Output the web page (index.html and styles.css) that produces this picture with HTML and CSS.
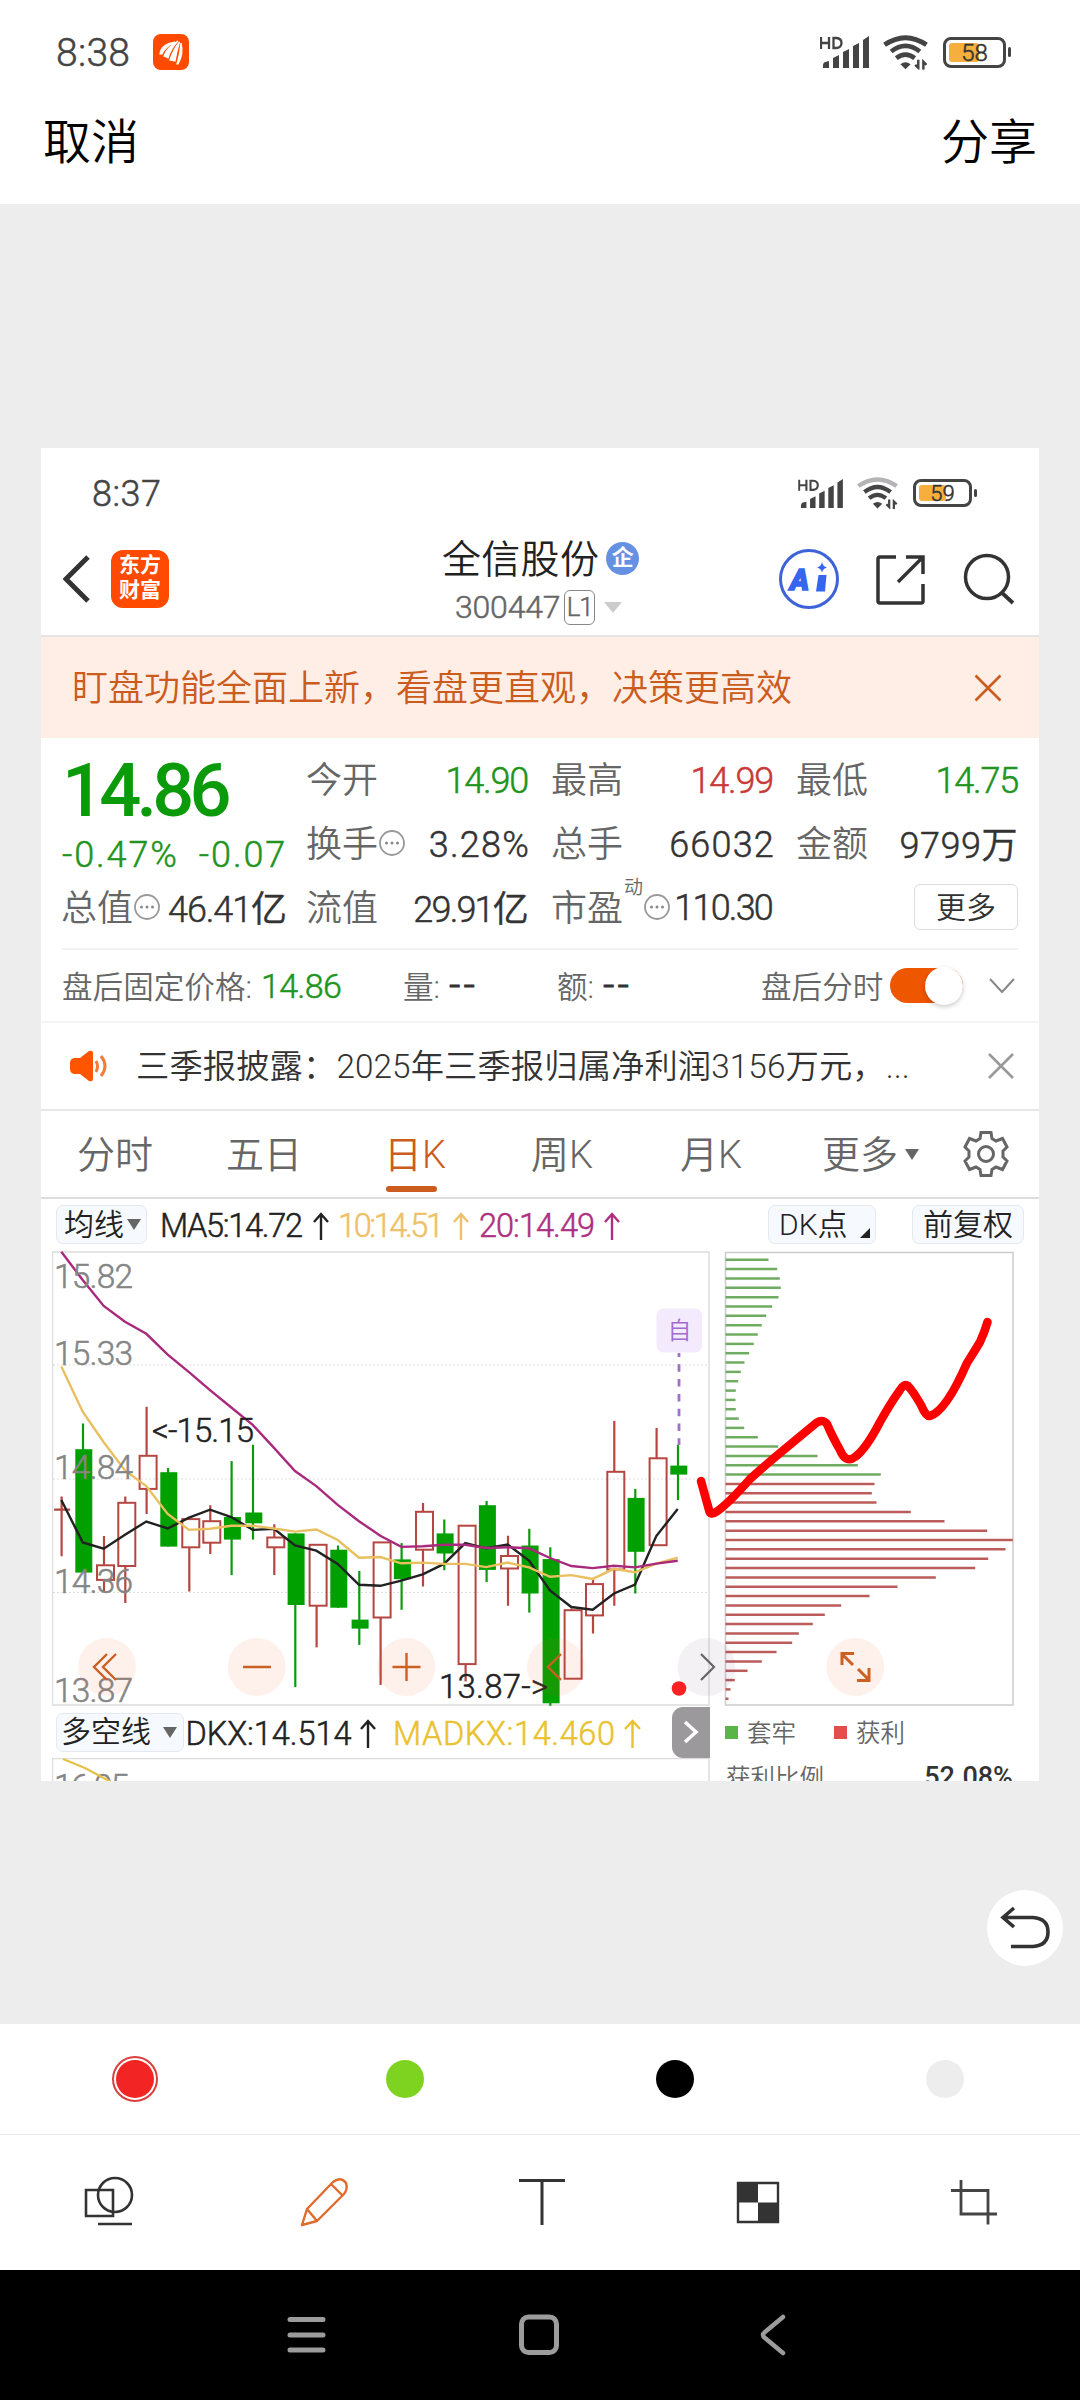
FILE: index.html
```html
<!DOCTYPE html>
<html lang="zh-CN">
<head>
<meta charset="utf-8">
<title>编辑图片</title>
<link rel="stylesheet" href="styles.css">
</head>
<body>
<svg width="0" height="0" class="defs">
  <symbol id="signal" viewBox="0 0 50 34">
    <path d="M1 2v12M1 8h8M9 2v12M13.500 3v10h3q5-.5 5-5t-5-5z" fill="none" stroke="#444" stroke-width="2.300"/>
    <g fill="#444"><path d="M3 33v-3q0-2 2-3l4-1v7zM13 33V23l6-3v13zM23 33V17l6-3v19zM33 33V11l6-3v25zM43 33V5l6-4v32z"/></g>
  </symbol>
  <symbol id="wifi" viewBox="0 0 46 34">
    <path d="M9 16q14-11 28 0M14 22.500q9-7 18 0" fill="none" stroke="#444" stroke-width="4.600"/>
    <path d="M23 33.500l-5-5q5-4 10 0z" fill="#444"/>
    <path d="M35.500 24v8l-3-3M40.500 34v-8l3 3" fill="none" stroke="#444" stroke-width="2.400"/>
  </symbol>
  <symbol id="dots" viewBox="0 0 28 28">
    <circle cx="14" cy="14" r="12" fill="none" stroke="#999" stroke-width="1.800"/>
    <g fill="#888"><circle cx="8.500" cy="14" r="1.500"/><circle cx="14" cy="14" r="1.500"/><circle cx="19.500" cy="14" r="1.500"/></g>
  </symbol>
</svg>

<header class="top">
  <div class="status">
    <span class="clock">8:38</span>
    <svg class="app" viewBox="0 0 36 36"><rect width="36" height="36" rx="8" fill="#ff4a00"/><path d="M7 20Q8 10 22 8Q13 12 9 20zM11 22Q14 13 25 7Q18 14 15 24zM17 26Q20 16 26.500 8Q24 16 22 27zM24 30Q27 20 28 9Q31 20 25 30z" fill="#fff" stroke="#fff" stroke-width="1.200"/></svg>
    <svg class="sig" viewBox="0 0 50 34"><use href="#signal"/></svg>
    <svg class="wif" viewBox="0 0 46 34"><path d="M2.500 9.500q20.500-14 41 0" fill="none" stroke="#444" stroke-width="4.800"/><use href="#wifi"/></svg>
    <span class="batt"><i></i><b>58</b></span>
  </div>
  <div class="actions"><span>取消</span><span>分享</span></div>
</header>

<main class="stage">
  <section class="card">
    <div class="istatus">
      <span class="clock">8:37</span>
      <svg class="sig" viewBox="0 0 50 34"><use href="#signal"/></svg>
      <svg class="wif" viewBox="0 0 46 34"><path d="M2.500 9.500q20.500-14 41 0" fill="none" stroke="#b5b3b5" stroke-width="4.800"/><use href="#wifi"/></svg>
      <span class="batt"><i></i><b>59</b></span>
    </div>
    <div class="inav">
      <svg class="back" viewBox="0 0 28 48"><path d="M25 2L3 24l22 22" fill="none" stroke="#333" stroke-width="5"/></svg>
      <div class="brand">东方<br>财富</div>
      <div class="title">
        <div class="name"><span>全信股份</span><em>企</em></div>
        <div class="code"><span>300447</span><u>L1</u><i class="tri"></i></div>
      </div>
      <svg class="navicons" viewBox="0 0 160 70">
        <circle cx="34" cy="35" r="28.500" fill="none" stroke="#3e63d8" stroke-width="3"/>
        <text x="15" y="46" class="ai" textLength="23">A</text>
        <path d="M43.500 31h8l-1.500 16.500h-9z" fill="#3566f0"/>
        <path d="M47 18q1 4.500 5 5.500q-4 1-5 5q-1-4-5-5q4-1 5-5.500z" fill="#3566f0"/>
        <path d="M121 13h-16q-2 0-2 2v42q0 2 2 2h41q2 0 2-2V40M131 13h17v17M148 13L123 38" fill="none" stroke="#333" stroke-width="3.500"/>
      </svg>
      <svg class="search" viewBox="0 0 52 52"><circle cx="24" cy="24" r="21.500" fill="none" stroke="#333" stroke-width="3.500"/><path d="M38 39l12 11" stroke="#333" stroke-width="3.800"/></svg>
    </div>
    <div class="banner"><span>盯盘功能全面上新，看盘更直观，决策更高效</span><svg width="28" height="28" viewBox="0 0 28 28"><path d="M1.500 1.500l25 25M26.500 1.500l-25 25" stroke="#cc5c1d" stroke-width="2.600"/></svg></div>

    <div class="quote">
      <div class="price">
        <strong>14.86</strong>
        <div class="chg"><span>-0.47%</span><span>-0.07</span></div>
        <div class="cell"><span>总值</span><svg class="dot"><use href="#dots"/></svg><b class="n2">46.41亿</b></div>
      </div>
      <div class="grid">
        <div class="cell"><span>今开</span><b class="g n1">14.90</b></div>
        <div class="cell"><span>最高</span><b class="r n1">14.99</b></div>
        <div class="cell"><span>最低</span><b class="g n1 last">14.75</b></div>
        <div class="cell"><span>换手</span><svg class="dot"><use href="#dots"/></svg><b class="n3">3.28%</b></div>
        <div class="cell"><span>总手</span><b class="n3">66032</b></div>
        <div class="cell"><span>金额</span><b class="n5">9799万</b></div>
        <div class="cell"><span>流值</span><b class="n4">29.91亿</b></div>
        <div class="cell"><span>市盈</span><sup>动</sup><svg class="dot"><use href="#dots"/></svg><b class="n4 pe">110.30</b></div>
        <div class="cell"><button class="more">更多</button></div>
      </div>
    </div>

    <div class="after">
      <span class="a1">盘后固定价格:</span><b class="g a2">14.86</b>
      <span class="a3">量:</span><b class="a4">--</b>
      <span class="a3b">额:</span><b class="a4b">--</b>
      <span class="a5">盘后分时</span><div class="toggle"><i></i></div>
      <svg width="26" height="16" viewBox="0 0 26 16"><path d="M1 1l12 13L25 1" fill="none" stroke="#888" stroke-width="2"/></svg>
    </div>
    <div class="news">
      <svg class="horn" viewBox="0 0 38 32"><path d="M4 8h6l9-7q4-1 4 2v26q0 3-4 2l-9-7H4q-4-1-4-5v-6q0-4 4-5z" fill="#ff5500"/><path d="M26 11q3 5 0 11M31 6q8 10 0 20" fill="none" stroke="#f47a3a" stroke-width="3"/></svg>
      <p>三季报披露：2025年三季报归属净利润3156万元，...</p>
      <svg width="26" height="26" viewBox="0 0 26 26"><path d="M1 1l24 24M25 1L1 25" stroke="#999" stroke-width="2.600"/></svg>
    </div>
    <nav class="tabs">
      <span class="t1">分时</span><span class="t2">五日</span><span class="t3 on">日K</span><span class="t4">周K</span><span class="t5">月K</span><span class="t6">更多</span><i class="tri"></i>
      <svg class="gear" viewBox="-23 -23 46 46"><path d="M-5-21.500H5L6-15.500L10-13L16.500-15.500L21-7L17-3V3L21 7L16.500 15.500L10 13L6 15.500L5 21.500H-5L-6 15.500L-10 13L-16.500 15.500L-21 7L-17 3V-3L-21-7L-16.500-15.500L-10-13L-6-15.500z" fill="none" stroke="#666" stroke-width="3"/><circle r="7.500" fill="none" stroke="#666" stroke-width="3"/></svg>
    </nav>
    <div class="ma">
      <span class="pill p1">均线<i class="tri"></i></span>
      <svg class="malegend" viewBox="0 0 480 40">
        <text x="1" y="32" textLength="143" fill="#222" stroke="#222">MA5:14.72</text>
        <text x="179" y="32" textLength="106" fill="#eec067" stroke="#eec067">10:14.51</text>
        <text x="320" y="32" textLength="116" fill="#ae2f80" stroke="#ae2f80">20:14.49</text>
        <g fill="none" stroke-width="2.400"><path d="M162 35V9M155 17l7-8 7 8" stroke="#222"/><path d="M302 35V9M295 17l7-8 7 8" stroke="#eec067"/><path d="M453 35V9M446 17l7-8 7 8" stroke="#ae2f80"/></g>
      </svg>
      <span class="pill p2">DK点<i class="corner"></i></span>
      <span class="pill p3">前复权</span>
    </div>

    <div class="charts">
      <div class="left">
        <svg id="kline" width="658" height="456" viewBox="52 1250 658 456"></svg>
        <div class="dkx">
          <span class="pill p4">多空线<i class="tri"></i></span>
          <svg class="dkxlegend" viewBox="187 1707 485 50">
            <text x="185.500" y="1744.500" textLength="166" fill="#222" stroke="#222">DKX:14.514</text>
            <text x="393" y="1744.500" textLength="222" fill="#e9c22f" stroke="#e9c22f">MADKX:14.460</text>
            <g fill="none" stroke-width="2.400"><path d="M368 1748v-27M361 1729l7-8 7 8" stroke="#222"/><path d="M632.500 1748v-27M625 1729l7.500-8 7.500 8" stroke="#e9c22f"/></g>
          </svg>
          <span class="next"><svg width="16" height="24" viewBox="0 0 16 24"><path d="M2 2l11 10L2 22" fill="none" stroke="#fff" stroke-width="3.500"/></svg></span>
        </div>
        <svg width="658" height="23" viewBox="52 1758 658 23">
          <path d="M52.500 1781v-22.500H709V1781" fill="none" stroke="#ddd" stroke-width="1.500"/>
          <text x="54" y="1797.500" textLength="75" class="axis">16.05</text>
          <path d="M63 1759l22 9 26 14" fill="none" stroke="#e6c14a" stroke-width="2.200"/>
        </svg>
      </div>
      <div class="right">
        <svg id="chips" width="292" height="456" viewBox="723 1250 292 456"></svg>
        <div class="legend"><i class="lg"></i><span>套牢</span><i class="lr"></i><span>获利</span></div>
        <div class="ratio"><span>获利比例</span><b>52.08%</b></div>
      </div>
    </div>
    <svg class="overlay" viewBox="41 1250 998 456">
      <g fill="#f4622d" fill-opacity=".09"><circle cx="107" cy="1667" r="29"/><circle cx="256.700" cy="1667" r="29"/><circle cx="406.300" cy="1667" r="29"/><circle cx="556" cy="1667" r="29"/><circle cx="855.300" cy="1667" r="29"/></g>
      <circle cx="706.500" cy="1667" r="29" fill="#705080" fill-opacity=".08"/>
      <g fill="none" stroke="#cc5f22" stroke-width="2.400"><path d="M107 1654l-13 13 13 13M116 1654l-13 13 13 13M243 1667h28M392.500 1667h28M406.500 1653v28M561 1654l-13 13 13 13"/><path d="M853 1665l-11-11M842 1665v-11.500h12M858 1669l11 11M869 1668v12.500h-12" stroke-width="3"/></g>
      <path d="M701 1654l13 13-13 13" fill="none" stroke="#666" stroke-width="2.200"/>
      <path d="M701 1481L709 1510Q710 1516 716 1512Q727 1505 750 1479Q762 1468 780 1453L815 1424Q822 1418 827 1424Q832 1436 840 1450Q846 1464 855 1457Q866 1449 880 1422Q890 1404 900 1390Q904 1383 908 1386Q913 1391 921 1405Q926 1417 930 1416Q946 1411 967 1363Q974 1352 980 1342Q985 1331 987.500 1322" fill="none" stroke="#f00" stroke-width="8.500" stroke-linecap="round" stroke-linejoin="round"/>
    </svg>
  </section>
  <svg class="undo" viewBox="987 1890 76 76"><circle cx="1025" cy="1928" r="38" fill="#fff"/><path d="M1014 1908l-11 9.500 11 9.500M1004 1917.500h29q15 1 15 14.500t-15 14.500h-22" fill="none" stroke="#333" stroke-width="3.600"/></svg>
</main>

<div class="colors"><i class="c1"></i><i class="c2"></i><i class="c3"></i><i class="c4"></i></div>
<div class="tools">
  <svg viewBox="78 2170 60 60"><g fill="none" stroke="#333" stroke-width="2.600"><path d="M86 2189h27v26H86zM98 2223h34"/><circle cx="115" cy="2194" r="17"/></g></svg>
  <svg viewBox="295 2171 60 60"><g fill="none" stroke="#df6b2c" stroke-width="2.400" stroke-linejoin="round"><path d="M302 2225l5-16 26-27q8-6 13 1 2 6-2 11l-27 27zM307 2209l10 12M331 2184l11 11"/></g></svg>
  <svg viewBox="512 2171 60 60"><path d="M519 2180.500h46M542 2180v45" stroke="#333" stroke-width="3" fill="none"/></svg>
  <svg viewBox="728 2171 60 60"><path d="M738 2183h40v39h-40z" fill="#fff" stroke="#333" stroke-width="2.400"/><path d="M738 2183h20v19.500h-20zM758 2202.500h20v20h-20z" fill="#333"/></svg>
  <svg viewBox="945 2171 60 60"><path d="M951 2190.500h37v34M961 2180v34h36" fill="none" stroke="#444" stroke-width="2.800"/></svg>
</div>
<footer class="sys">
  <svg viewBox="0 2270 1080 130"><g fill="none" stroke="#9c9c9c" stroke-width="5" stroke-linecap="round"><path d="M290 2319.500h33M290 2335h33M290 2350h33"/><rect x="521.500" y="2317" width="35" height="35.500" rx="7" /><path d="M783 2317l-18 15q-4 3 0 6l18 15" stroke-width="4.500"/></g></svg>
</footer>
<script src="script.js"></script>
</body>
</html>
```
FILE: styles.css
```css
* { box-sizing: border-box; margin: 0; padding: 0; }
body { width: 1080px; height: 2400px; background: #fff; font-family: Roboto, "Noto Sans CJK SC", sans-serif; font-weight: 350; color: #333; overflow: hidden; display: flex; flex-direction: column; }
svg { display: block; flex: none; }
.defs { position: absolute; }
b, strong, em, u { font-weight: 350; font-style: normal; text-decoration: none; }
span, b { white-space: nowrap; }
b, u, .clock, .chg span, .code span { -webkit-text-stroke: .5px; }
.g { color: #1f9420 !important; }
.r { color: #c83a38 !important; }
.tri { border: 7px solid transparent; border-top: 11px solid #666; border-bottom: 0; }

.top { height: 204px; flex: none; }
.status { height: 104px; display: flex; align-items: center; padding-left: 56px; }
.clock { color: #444; }
.status .clock { width: 97px; font-size: 39px; padding-top: 2px; letter-spacing: .3px; }
.app { width: 36px; height: 36px; }
.status .sig { width: 50px; height: 34px; margin-left: 631px; }
.status .wif { width: 47px; height: 35px; margin-left: 12px; }
.batt { position: relative; border: 3px solid #444; border-radius: 8px; display: flex; align-items: center; justify-content: center; }
.batt::after { content: ""; position: absolute; right: -8px; top: 30%; height: 40%; width: 3px; border-radius: 2px; background: #444; }
.batt i { position: absolute; left: 3px; top: 3px; bottom: 3px; width: 30px; background: #f6ae3c; border-radius: 3px; }
.batt b { position: relative; font-size: 24px; line-height: 20px; color: #333; padding-top: 1px; }
.status .batt { width: 63px; height: 31px; margin-left: 14px; }
.actions { height: 76px; display: flex; justify-content: space-between; align-items: center; padding: 1px 43px 0; font-size: 48px; line-height: 68px; color: #000; }

.stage { height: 1820px; flex: none; background: #ededed; padding: 244px 41px 0; position: relative; }
.card { position: relative; width: 998px; height: 1333px; background: #fff; overflow: hidden; }
.undo { position: absolute; left: 987px; top: 1686px; width: 76px; height: 76px; }

.istatus { height: 90px; display: flex; align-items: center; padding-left: 51px; }
.istatus .clock { width: 706px; font-size: 36px; padding-top: 2px; letter-spacing: .5px; }
.istatus .sig { width: 46px; height: 31px; }
.istatus .wif { width: 43px; height: 32px; margin-left: 12px; }
.istatus .batt { width: 59px; height: 28px; margin-left: 14px; }
.istatus .batt b { font-size: 22px; }
.istatus .batt i { width: 27px; }

.inav { height: 99px; display: flex; padding-left: 22px; border-bottom: 2px solid #e6e3e4; }
.back { width: 28px; height: 48px; margin-top: 17px; }
.brand { width: 58px; height: 58px; margin: 12px 0 0 20px; border-radius: 12px; background: #ff4a00; color: #fff; font-weight: 700; font-size: 21px; line-height: 25px; text-align: center; padding-top: 3px; }
.title { width: 180px; margin-left: 273px; }
.name { height: 44px; display: flex; align-items: center; font-size: 39px; color: #222; }
.name span { padding-bottom: 8px; letter-spacing: .3px; }
.name em { width: 33px; height: 33px; flex: none; margin-left: 7px; margin-bottom: 4px; border-radius: 50%; background: #6690e2; color: #fff; font-size: 22px; font-weight: 700; line-height: 32px; text-align: center; }
.code { display: flex; align-items: center; margin: 7px 0 0 13px; height: 36px; color: #666; font-size: 32px; }
.code span { width: 111px; letter-spacing: -.2px; }
.code u { width: 31px; height: 35px; border: 1.500px solid #888; border-radius: 6px; font-size: 26px; line-height: 33px; text-align: center; letter-spacing: -1px; }
.code .tri { margin-left: 9px; border-width: 11px 9px 0; border-top-color: #ccc; }
.navicons { width: 160px; height: 70px; margin: 6px 0 0 153px; }
.ai { font: italic 900 29px Roboto, sans-serif; fill: #3566f0; stroke: #3566f0; stroke-width: 1.500px; }
.search { width: 52px; height: 52px; margin: 15px 0 0 28px; }
.banner { height: 101px; background: #feeee6; display: flex; align-items: center; justify-content: space-between; padding: 0 37px 0 31px; font-size: 36px; color: #cc5c1d; }
.banner span { padding-bottom: 6px; }

.quote { height: 212px; margin: 0 21px; border-bottom: 2px solid #f2f2f2; display: flex; }
.price { width: 245px; }
.price strong { display: block; height: 86px; padding-top: 14px; line-height: 78px; font-size: 74px; font-weight: 500; letter-spacing: -4.800px; color: #0a9a0a; }
.chg { height: 51px; display: flex; gap: 20px; font-size: 36px; line-height: 63px; color: #1f9420; letter-spacing: 1.900px; }
.price .cell { height: 64px; width: 224px; }
.grid { display: grid; grid-template-columns: 223px 223px 221px; column-gap: 22px; grid-template-rows: 64px 64px 63px; padding-top: 9px; }
.cell { display: flex; align-items: center; font-size: 36px; color: #666; }
.cell > span { padding-bottom: 4px; margin-left: -1px; }
.cell b { margin-left: auto; color: #333; padding-top: 3px; }
.cell .n1 { letter-spacing: -1.200px; margin-right: 2px; }
.cell .last { margin-right: 0; }
.cell .n2 { letter-spacing: -1.100px; padding: 0 0 2px; }
.cell .n3 { letter-spacing: 1.200px; }
.cell .n4 { letter-spacing: -1.800px; padding: 0 0 2px; margin-right: 3px; }
.cell .n5 { letter-spacing: .5px; padding: 0 0 2px; }
.cell .pe { padding: 2px 0 0; }
.dot { width: 28px; height: 28px; }
.cell sup { font-size: 19px; line-height: 28px; align-self: flex-start; margin: -1px 0 0 1px; }
.more { width: 104px; height: 46px; margin-left: auto; border: 1.500px solid #ddd; border-radius: 6px; background: #fff; font: 350 30px "Noto Sans CJK SC", sans-serif; line-height: 38px; padding-bottom: 3px; color: #333; }

.after { height: 73px; display: flex; align-items: center; padding-left: 21px; border-bottom: 2px solid #f4f4f4; font-size: 30.600px; color: #666; }
.after b { color: #333; font-size: 34px; }
.after span { padding-bottom: 2px; }
.a1 { width: 199px; } .a2 { width: 142px; letter-spacing: -.7px; } .a3 { width: 46px; } .a4 { width: 108px; } .a3b { width: 46px; } .a4b { width: 158px; } .a5 { width: 129px; }
.after .a4, .after .a4b { letter-spacing: 3px; font-size: 40px; -webkit-text-stroke: .8px; }
.toggle { width: 73px; height: 35px; border-radius: 18px; background: #ee5600; position: relative; margin-right: 26px; }
.toggle i { position: absolute; right: 0; top: -1px; width: 38px; height: 38px; border-radius: 50%; background: #fff; box-shadow: 0 2px 5px #0003; }
.news { height: 88px; display: flex; align-items: center; padding-left: 29px; border-bottom: 2px solid #e6e6e6; font-size: 33.300px; }
.horn { width: 38px; height: 32px; }
.news p { width: 851px; margin-left: 28px; margin-right: 1px; padding-bottom: 6px; white-space: nowrap; letter-spacing: .1px; }
.tabs { height: 88px; display: flex; align-items: center; font-size: 38px; color: #666; padding-left: 36px; border-bottom: 2px solid #ddd; }
.tabs span { width: 149px; padding-bottom: 5px; }
.tabs .t2 { width: 158px; } .tabs .t3 { width: 147px; } .tabs .t4 { width: 149px; } .tabs .t5 { width: 142px; } .tabs .t6 { width: 83px; }
.tabs .on { color: #cc5c1d; position: relative; }
.on::after { content: ""; position: absolute; left: 2px; bottom: -8px; width: 51px; height: 6px; border-radius: 3px; background: #cc5c1d; }
.gear { width: 46px; height: 46px; margin-left: 44px; }

.ma { height: 51px; display: flex; align-items: flex-start; padding: 6px 0 0 15px; }
.pill { height: 39px; border: 1.500px solid #e4e9f1; border-radius: 7px; background: #f6f9fe; font-size: 30px; line-height: 36px; color: #222; display: flex; align-items: center; }
.p1 { width: 91px; padding-left: 7px; } .p1 .tri { margin-left: 3px; }
.malegend { width: 480px; height: 40px; margin-left: 12px; }
.malegend text, .dkxlegend text { font-size: 32.500px; stroke-width: .5px; }
.p2 { width: 108px; margin-left: 129px; padding-left: 10px; position: relative; }
.corner { position: absolute; right: 5px; bottom: 5px; border-left: 10px solid transparent; border-bottom: 10px solid #222; }
.p3 { width: 112px; margin-left: 36px; padding-left: 10px; }

.charts { display: flex; }
.left { width: 658px; margin-left: 11px; }
.right { width: 292px; margin-left: 13px; }
.dkx { height: 52px; display: flex; align-items: center; padding-left: 4px; }
.p4 { width: 128px; padding-left: 4px; } .p4 .tri { margin-left: 12px; }
.dkxlegend { width: 485px; height: 50px; margin-left: 3px; }
.next { width: 38px; height: 51px; background: #9c999c; border-radius: 11px 0 0 11px; display: flex; align-items: center; justify-content: center; }
.axis { font-size: 33.500px; fill: #858585; stroke: #858585; stroke-width: .5px; }
.mark { font-size: 33px; fill: #222; stroke: #222; stroke-width: .5px; }
.self { font-size: 24px; fill: #a36bd0; text-anchor: middle; }
.legend { display: flex; align-items: center; height: 52px; font-size: 24.500px; color: #666; padding-left: 2px; }
.legend span { padding-bottom: 2px; }
.legend i { width: 13px; height: 13px; margin-right: 9px; background: #5ab548; }
.legend .lr { background: #e54c4c; margin-left: 38px; }
.ratio { display: flex; justify-content: space-between; align-items: center; padding: 0 2px 0 3px; height: 37px; font-size: 24.500px; color: #666; }
.ratio b { font-size: 27px; font-weight: 500; color: #333; -webkit-text-stroke: 0; }
.overlay { position: absolute; left: 0; top: 802px; width: 998px; height: 456px; }

.colors { height: 111px; flex: none; display: flex; justify-content: space-around; align-items: center; border-bottom: 1.500px solid #eaeaea; }
.colors i { width: 38px; height: 38px; border-radius: 50%; }
.c1 { background: #f22424; outline: 2px solid #d8403e; outline-offset: 2.500px; }
.c2 { background: #7ed321; } .c3 { background: #000; } .c4 { background: #ededed; }
.tools { height: 135px; flex: none; display: flex; justify-content: space-between; align-items: center; padding: 0 75px 4px 78px; }
.tools svg { width: 60px; height: 60px; }
.sys { height: 130px; flex: none; background: #000; }
.sys svg { width: 1080px; height: 130px; }
```
FILE: script.js
```js
// Chart data is in plot units; PX and PY convert to page pixels.
const PX = v => +(40 + v / 3).toFixed(1);
const PY = v => +(1240 + v / 2.877).toFixed(1);

// x, high, low, body top, body bottom, direction
const candles = [
  [64,738,910,776,776,'r'],[128,528,957,602,957,'g'],[191,852,1010,936,978,'r'],[255,738,1044,756,938,'r'],
  [319,480,788,621,716,'r'],[383,656,882,668,882,'g'],[447,802,1011,803,884,'r'],[510,763,903,809,871,'r'],
  [574,636,964,797,862,'g'],[638,589,862,784,815,'g'],[702,818,964,856,884,'r'],[765,844,1286,844,1050,'g'],
  [829,877,1172,877,1052,'r'],[893,879,1058,891,1058,'g'],[957,952,1165,1092,1118,'g'],[1021,870,1280,870,1086,'r'],
  [1084,872,1064,919,976,'g'],[1148,757,997,782,891,'r'],[1212,804,950,844,902,'g'],[1276,822,1270,822,1220,'r'],
  [1339,751,984,763,949,'g'],[1403,851,1052,909,945,'r'],[1467,831,1072,879,1017,'g'],[1530,884,1340,918,1333,'g'],
  [1594,1060,1262,1065,1262,'r'],[1658,975,1132,990,1080,'r'],[1722,521,1052,667,948,'r'],[1785,716,1017,742,897,'g'],
  [1849,541,878,628,878,'r'],[1913,590,748,649,675,'g']
];
const ma = {
  '#222': [748,870,888,848,810,830,799,776,797,834,831,879,894,932,992,995,980,962,932,872,887,876,922,1008,1056,1064,1017,991,852,774],
  '#eabf60': [364,494,582,663,708,788,834,831,822,822,830,839,833,863,914,912,930,928,932,932,941,928,942,969,964,975,946,956,931,914],
  '#a92a7c': [34,115,190,235,270,330,380,432,482,532,598,665,708,762,809,851,883,881,877,877,886,884,887,915,938,944,937,942,931,923]
};

let k = '<rect x="52.500" y="1252" width="656.500" height="453" fill="none" stroke="#ddd" stroke-width="1.500"/>';
for (const y of [1365, 1479, 1592.5]) k += `<path d="M53 ${y}H709" stroke="#ddd" stroke-dasharray="2 2"/>`;
for (const [x, hi, lo, top, bot, dir] of candles) {
  const cx = PX(x) + .3, a = PY(top), b = PY(bot);
  if (dir === 'g') {
    k += `<path d="M${cx} ${PY(hi)}V${PY(lo)}" stroke="#0a9a0a" stroke-width="2.200"/><rect x="${cx - 7.7}" y="${a}" width="17" height="${b - a}" fill="#00a000"/>`;
  } else if (top === bot) {
    k += `<path d="M${cx} ${PY(hi)}V${PY(lo)}M${cx - 7.5} ${a}h16" stroke="#b54642" stroke-width="2.200"/>`;
  } else {
    k += `<path d="M${cx} ${PY(hi)}V${a}M${cx} ${b}V${PY(lo)}" stroke="#b54642" stroke-width="2.200"/><rect x="${cx - 7}" y="${a}" width="17" height="${b - a}" fill="none" stroke="#b54642" stroke-width="2"/>`;
  }
}
for (const color in ma) {
  k += `<polyline points="${ma[color].map((v, i) => PX(candles[i][0]) + ',' + PY(v)).join(' ')}" fill="none" stroke="${color}" stroke-width="2.400"/>`;
}
[['15.82', 1287.5], ['15.33', 1365], ['14.84', 1478.5], ['14.36', 1592.5], ['13.87', 1702]].forEach(([t, y]) => {
  k += `<text class="axis" x="54" y="${y}" textLength="79">${t}</text>`;
});
k += '<text class="mark" x="152" y="1441.500" textLength="102">&lt;-15.15</text>';
k += '<text class="mark" x="439" y="1697.500" textLength="109">13.87-&gt;</text>';
k += '<rect x="656.500" y="1308.500" width="45.500" height="44" rx="7" fill="#f4eafd"/><text class="self" x="679.500" y="1339">自</text>';
k += '<path d="M679 1353V1445" stroke="#a36fca" stroke-width="2.800" stroke-dasharray="7.500 7.300" stroke-dashoffset="3.500"/>';
k += '<circle cx="679" cy="1688.500" r="7.300" fill="#f22"/>';
document.getElementById('kline').innerHTML = k;

const chips = [205,231,239,242,235,216,198,185,173,161,147,133,122,114,107,106,107,116,132,173,234,352,473,542,
  523,515,529,632,733,861,938,916,864,825,707,592,508,423,374,338,296,276,229,185,142,104,91,85];
let h = '<rect x="725.500" y="1252.500" width="287.500" height="452.500" fill="none" stroke="#ccc" stroke-width="1.500"/>';
chips.forEach((v, i) => {
  h += `<path d="M725.500 ${(1259.8 + i * 9.34).toFixed(1)}h${((v - 76) / 3).toFixed(1)}" stroke="${i < 24 ? '#6fab60' : '#bb5b5a'}" stroke-width="2.500"/>`;
});
document.getElementById('chips').innerHTML = h;
```
